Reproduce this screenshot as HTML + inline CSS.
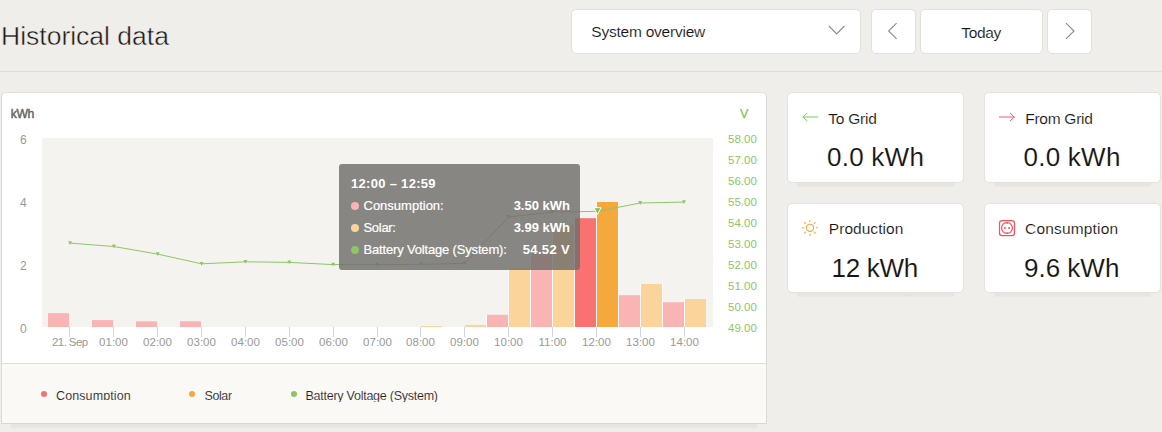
<!DOCTYPE html>
<html lang="en">
<head>
<meta charset="utf-8">
<title>Historical data</title>
<style>
*{box-sizing:border-box;margin:0;padding:0}
html,body{width:1162px;height:432px;overflow:hidden;background:#f0eeea}
body{position:relative;font-family:"Liberation Sans",Arial,sans-serif;color:#272622}
.t{position:absolute;white-space:nowrap;line-height:1}
.box{position:absolute;background:#fff;border:1px solid #e2e0db;border-radius:5px}
.hr{position:absolute;left:0;top:71px;width:1162px;height:1px;background:#dddbd6}
.card{position:absolute;background:#fff;border:1px solid #e4e2dd;border-radius:5px;box-shadow:0 13.5px 0 -10px rgba(40,30,10,.04)}
.ax{font-size:12px;margin-top:2px;color:#999}
.axr{font-size:11.5px;margin-top:1.6px;color:#8cc665}
.xl{font-size:11.5px;margin-top:1px;color:#999;transform:translateX(-50%)}
.lg{font-size:12.5px;margin-top:.8px;color:#24231f;-webkit-text-stroke:.12px #faf9f6}
.tt{font-size:13px;color:#fff;-webkit-text-stroke:.2px #fff}
.ttb{font-size:13px;color:#fff;font-weight:bold}
.h{font-size:15.5px;color:#161513;-webkit-text-stroke:.13px #fff}
.v{font-size:26px;color:#171613;-webkit-text-stroke:.1px #fff}
</style>
</head>
<body>
<div class="t" id="title" style="left:1px;top:23px;font-size:26.5px;color:#1a1917;-webkit-text-stroke:.45px #f0eeea">Historical data</div>

<div class="box" style="left:571px;top:9px;width:290px;height:45px"></div>
<div class="t h" id="sel" style="left:591.3px;top:24px;letter-spacing:-.23px">System overview</div>
<svg style="position:absolute;left:826px;top:22px" width="22" height="16" viewBox="0 0 22 16"><path d="M3 4 L10.7 12 L18.4 4" fill="none" stroke="#8d8b87" stroke-width="1.1"/></svg>

<div class="box" style="left:871px;top:9px;width:45px;height:45px"></div>
<svg style="position:absolute;left:884px;top:20px" width="18" height="22" viewBox="0 0 18 22"><path d="M12.6 3.2 L4.6 11 L12.6 18.8" fill="none" stroke="#8d8b87" stroke-width="1.1"/></svg>
<div class="box" style="left:920px;top:9px;width:123px;height:45px"></div>
<div class="t h" id="today" style="left:961.3px;top:25px;letter-spacing:-.38px">Today</div>
<div class="box" style="left:1047px;top:9px;width:45px;height:45px"></div>
<svg style="position:absolute;left:1061px;top:20px" width="18" height="22" viewBox="0 0 18 22"><path d="M5 3.2 L13 11 L5 18.8" fill="none" stroke="#8d8b87" stroke-width="1.1"/></svg>

<div class="hr"></div>

<!-- chart card -->
<div class="card" id="chart" style="left:1px;top:92px;width:766px;height:332px;overflow:hidden;border-radius:5px 5px 0 0;border-color:#e2e0db #dcdad5 #d9d7d2 #dcdad5">
  <div style="position:absolute;left:0;top:270px;width:766px;height:62px;background:#faf9f6;border-top:1px solid #dfddd8"></div>
</div>

<div class="t" id="kwh" style="left:10.7px;top:107.7px;font-size:12.2px;letter-spacing:-.35px;color:#666562;-webkit-text-stroke:.45px #666562">kWh</div>
<div class="t" id="vv" style="left:740px;top:108px;font-size:12.5px;color:#84c25c;-webkit-text-stroke:.25px #84c25c">V</div>

<svg id="plot" style="position:absolute;left:0;top:0" width="780" height="360" viewBox="0 0 780 360">
  <rect x="42" y="138" width="671" height="189" fill="#f5f3ef"/>
  <path stroke="#ccd6eb" stroke-width="1" d="M69.5 327V337M113.5 327V337M157.5 327V337M201.5 327V337M245.5 327V337M289.5 327V337M333.5 327V337M377.5 327V337M420.5 327V337M464.5 327V337M508.5 327V337M552.5 327V337M596.5 327V337M640.5 327V337M684.5 327V337"/>
  <g fill="#fbb4b4"><rect x="48" y="313.2" width="21" height="13.8"/><rect x="92" y="320.1" width="21" height="6.9"/><rect x="136" y="321.3" width="21" height="5.7"/><rect x="180" y="321.3" width="21" height="5.7"/><rect x="487" y="314.8" width="21" height="12.2"/><rect x="531" y="254.0" width="21" height="73.0"/><rect x="619" y="295.2" width="21" height="31.8"/><rect x="663" y="302.2" width="21" height="24.8"/></g>
  <rect x="575" y="218.2" width="21" height="108.8" fill="#fa7171"/>
  <g fill="#fad49b"><rect x="421" y="326.0" width="21" height="1.0"/><rect x="465" y="325.0" width="21" height="2.0"/><rect x="509" y="268.0" width="21" height="59.0"/><rect x="553" y="224.7" width="21" height="102.3"/><rect x="641" y="284.0" width="21" height="43.0"/><rect x="685" y="299.0" width="21" height="28.0"/></g>
  <rect x="597" y="202" width="21" height="125" fill="#f5a83c"/>
  <path fill="#fdfcfa" d="M486 314.8V327h1V314.8zM508 268.0V327h1V268.0zM530 254.0V327h1V254.0zM552 224.7V327h1V224.7zM574 218.2V327h1V218.2zM596 202.0V327h1V202.0zM618 202.0V327h1V202.0zM640 284.0V327h1V284.0zM662 284.0V327h1V284.0zM684 299.0V327h1V299.0z"/>
  <path id="vline" d="M70.0 243.1L113.9 246.5L157.7 254.1L201.6 263.8L245.4 261.8L289.3 262.4L333.2 264.6L377.0 264.7L420.9 264.3L464.7 263.4L508.6 217.0L552.5 212.0L597.0 211.4L640.2 203.0L684.0 202.1" fill="none" stroke="#8cc665" stroke-width="1"/>
  <path id="markers" fill="#8cc665" d="M68.1 241.2H71.9L70.0 245.0ZM112.0 244.6H115.8L113.9 248.4ZM155.8 252.2H159.6L157.7 256.0ZM199.7 261.9H203.5L201.6 265.7ZM243.5 259.9H247.3L245.4 263.7ZM287.4 260.5H291.2L289.3 264.3ZM331.3 262.7H335.1L333.2 266.5ZM375.1 262.8H378.9L377.0 266.6ZM419.0 262.4H422.8L420.9 266.2ZM462.8 261.5H466.6L464.7 265.3ZM506.7 215.1H510.5L508.6 218.9ZM550.6 210.1H554.4L552.5 213.9ZM638.3 201.1H642.1L640.2 204.9ZM682.1 200.2H685.9L684.0 204.0Z"/>
  <path fill="#7fc25a" stroke="#fff" stroke-width="1" d="M594.0 207.7H601.0L597.5 214.5Z"/>
</svg>

<!-- tooltip -->
<div id="tip" style="position:absolute;left:339px;top:164px;width:241px;height:106px;background:rgba(112,110,106,.82);border-radius:3px"></div>
<div class="t ttb" id="tt0" style="left:351px;top:177px;letter-spacing:.3px">12:00 – 12:59</div>
<div style="position:absolute;left:351px;top:202px;width:8px;height:8px;border-radius:50%;background:#fbb4b4"></div>
<div style="position:absolute;left:351px;top:224px;width:8px;height:8px;border-radius:50%;background:#fad49b"></div>
<div style="position:absolute;left:351px;top:246px;width:8px;height:8px;border-radius:50%;background:#8cc665"></div>
<div class="t tt" id="tt1" style="left:363.5px;top:199px">Consumption:</div>
<div class="t tt" id="tt2" style="left:363.5px;top:221px;letter-spacing:-.3px">Solar:</div>
<div class="t tt" id="tt3" style="left:363.5px;top:243px;letter-spacing:-.17px">Battery Voltage (System):</div>
<div class="t ttb" id="tv1" style="right:592px;top:199px">3.50 kWh</div>
<div class="t ttb" id="tv2" style="right:592px;top:221px">3.99 kWh</div>
<div class="t ttb" id="tv3" style="right:592px;top:243px;letter-spacing:.35px">54.52 V</div>

<!-- left axis -->
<div class="t ax" id="y6" style="left:20px;top:132px">6</div>
<div class="t ax" id="y4" style="left:20px;top:195px">4</div>
<div class="t ax" id="y2" style="left:20px;top:258px">2</div>
<div class="t ax" id="y0" style="left:20px;top:321px">0</div>

<!-- right axis -->
<div class="t axr" id="r58" style="left:728px;top:132px">58.00</div>
<div class="t axr" style="left:728px;top:153px">57.00</div>
<div class="t axr" style="left:728px;top:174px">56.00</div>
<div class="t axr" style="left:728px;top:195px">55.00</div>
<div class="t axr" style="left:728px;top:216px">54.00</div>
<div class="t axr" style="left:728px;top:237px">53.00</div>
<div class="t axr" style="left:728px;top:258px">52.00</div>
<div class="t axr" style="left:728px;top:279px">51.00</div>
<div class="t axr" style="left:728px;top:300px">50.00</div>
<div class="t axr" style="left:728px;top:321px">49.00</div>

<!-- x labels -->
<div class="t xl" id="x0" style="left:69.8px;top:336px;letter-spacing:-.6px">21. Sep</div>
<div class="t xl" id="x1" style="left:113.5px;top:336px">01:00</div>
<div class="t xl" style="left:157.5px;top:336px">02:00</div>
<div class="t xl" style="left:201.5px;top:336px">03:00</div>
<div class="t xl" style="left:245.5px;top:336px">04:00</div>
<div class="t xl" style="left:289.5px;top:336px">05:00</div>
<div class="t xl" style="left:333.5px;top:336px">06:00</div>
<div class="t xl" style="left:377.5px;top:336px">07:00</div>
<div class="t xl" style="left:420.5px;top:336px">08:00</div>
<div class="t xl" style="left:464.5px;top:336px">09:00</div>
<div class="t xl" style="left:508.5px;top:336px">10:00</div>
<div class="t xl" style="left:552.5px;top:336px">11:00</div>
<div class="t xl" style="left:596.5px;top:336px">12:00</div>
<div class="t xl" style="left:640.5px;top:336px">13:00</div>
<div class="t xl" style="left:684.5px;top:336px">14:00</div>

<!-- legend -->
<div style="position:absolute;left:41.1px;top:391.4px;width:6px;height:6px;border-radius:50%;background:#f87171"></div>
<div style="position:absolute;left:189.4px;top:391.4px;width:6px;height:6px;border-radius:50%;background:#f5a83c"></div>
<div style="position:absolute;left:290.6px;top:391.4px;width:6px;height:6px;border-radius:50%;background:#8cc665"></div>
<div class="t lg" id="l1" style="left:56px;top:389px;height:10.6px;overflow:hidden;letter-spacing:.1px">Consumption</div>
<div class="t lg" id="l2" style="left:204.5px;top:389px;height:10.6px;overflow:hidden;letter-spacing:-.4px">Solar</div>
<div class="t lg" id="l3" style="left:305.5px;top:389px;height:12.6px;overflow:hidden;letter-spacing:-.25px">Battery Voltage (System)</div>

<!-- stat cards -->
<div class="card" style="left:787px;top:92px;width:177px;height:91px"></div>
<div class="card" style="left:984px;top:92px;width:177px;height:91px"></div>
<div class="card" style="left:787px;top:203px;width:177px;height:90px"></div>
<div class="card" style="left:984px;top:203px;width:177px;height:90px"></div>

<svg style="position:absolute;left:798px;top:109px" width="24" height="16" viewBox="0 0 24 16"><path d="M9.3 4 L4.8 8 L9.3 12 M4.8 8 H20.3" fill="none" stroke="#7dc75b" stroke-width="1"/></svg>
<svg style="position:absolute;left:995px;top:109px" width="24" height="16" viewBox="0 0 24 16"><path d="M15 4 L19.3 8 L15 12 M19.3 8 H4" fill="none" stroke="#f85a65" stroke-width="1"/></svg>

<div class="t h" id="h1" style="left:828.3px;top:111.1px;letter-spacing:-.25px">To Grid</div>
<div class="t h" id="h2" style="left:1025.3px;top:111.1px;letter-spacing:-.28px">From Grid</div>
<div class="t h" id="h3" style="left:828.8px;top:221.1px;letter-spacing:.04px">Production</div>
<div class="t h" id="h4" style="left:1025.1px;top:221.1px;letter-spacing:.17px">Consumption</div>

<div class="t v" id="v1" style="left:827px;top:143.7px;letter-spacing:.25px">0.0 kWh</div>
<div class="t v" id="v2" style="left:1023.5px;top:143.7px;letter-spacing:.25px">0.0 kWh</div>
<div class="t v" id="v3" style="left:831.5px;top:254.8px;letter-spacing:-.3px">12 kWh</div>
<div class="t v" id="v4" style="left:1024px;top:254.8px">9.6 kWh</div>

<!-- sun icon -->
<svg style="position:absolute;left:800px;top:218px" width="20" height="20" viewBox="0 0 20 20">
  <g fill="none" stroke="#f7a541" stroke-width="1.1" stroke-linecap="round">
    <circle cx="10" cy="9.8" r="3.6"/>
    <path d="M10 2.2V3.6M10 16V17.4M2.4 9.8H3.8M16.2 9.8H17.6M4.6 4.4L5.6 5.4M14.4 14.2L15.4 15.2M15.4 4.4L14.4 5.4M5.6 14.2L4.6 15.2"/>
  </g>
</svg>
<!-- socket icon -->
<svg style="position:absolute;left:997px;top:218px" width="20" height="20" viewBox="0 0 20 20">
  <g fill="none" stroke="#f8525e" stroke-width="1.25">
    <rect x="2.5" y="2.5" width="15" height="15" rx="2.6"/>
    <circle cx="10" cy="10" r="5.4"/>
    <path d="M10 4.6V6M10 14V15.4"/>
  </g>
  <circle cx="7.9" cy="10" r="1" fill="#f8525e"/><circle cx="12.1" cy="10" r="1" fill="#f8525e"/>
</svg>

</body>
</html>
